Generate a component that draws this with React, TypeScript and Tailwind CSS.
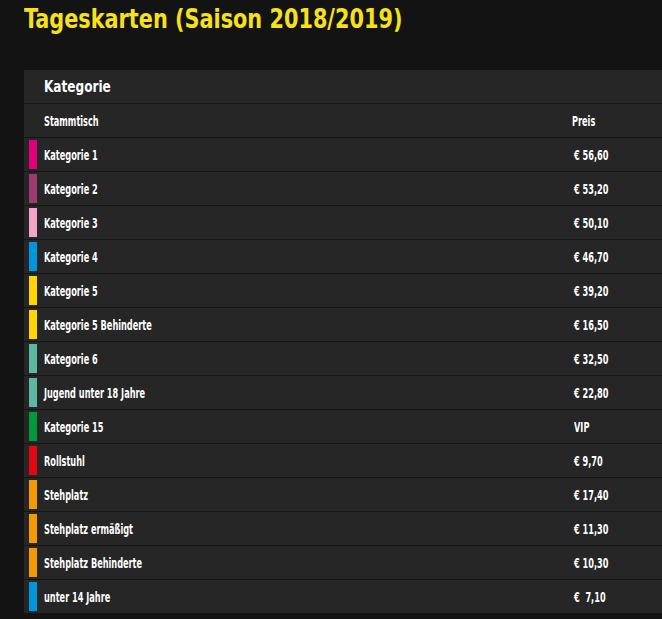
import React from "react";

const rows: { name: string; price: string; color: string }[] = [
  { name: "Kategorie 1", price: "€ 56,60", color: "#e2007a" },
  { name: "Kategorie 2", price: "€ 53,20", color: "#9c3b70" },
  { name: "Kategorie 3", price: "€ 50,10", color: "#f2a5c6" },
  { name: "Kategorie 4", price: "€ 46,70", color: "#0096dc" },
  { name: "Kategorie 5", price: "€ 39,20", color: "#ffd400" },
  { name: "Kategorie 5 Behinderte", price: "€ 16,50", color: "#ffd400" },
  { name: "Kategorie 6", price: "€ 32,50", color: "#5cb8a2" },
  { name: "Jugend unter 18 Jahre", price: "€ 22,80", color: "#5cb8a2" },
  { name: "Kategorie 15", price: "VIP", color: "#00993f" },
  { name: "Rollstuhl", price: "€ 9,70", color: "#e30613" },
  { name: "Stehplatz", price: "€ 17,40", color: "#f39a00" },
  { name: "Stehplatz ermäßigt", price: "€ 11,30", color: "#f39a00" },
  { name: "Stehplatz Behinderte", price: "€ 10,30", color: "#f39a00" },
  { name: "unter 14 Jahre", price: "€  7,10", color: "#0096dc" },
];

const cond = { fontFamily: '"DejaVu Sans Condensed", "Liberation Sans", sans-serif' };

function Narrow({ children, w }: { children: React.ReactNode; w: string }) {
  return (
    <span className={w}>
      <span className="inline-block whitespace-pre origin-left scale-x-[0.65]">{children}</span>
    </span>
  );
}

export default function App() {
  return (
    <div className="w-[662px] h-[619px] overflow-hidden bg-[#131313] pl-6 flex flex-col" style={cond}>
      <h1 className="text-[#f6e11a] text-[26px] font-bold leading-[34px] mt-[2px]">
        <span className="inline-block whitespace-pre origin-left scale-x-[0.89]">Tageskarten (Saison 2018/2019)</span>
      </h1>
      <div className="mt-[34px] bg-[#262626] flex flex-col">
        <div className="h-[34px] flex items-center pl-5 text-white text-[16px] font-bold border-b border-[#161616]">
          <span className="inline-block origin-left scale-x-[0.84]">Kategorie</span>
        </div>
        <div className="h-[34px] flex items-center pl-5 text-white text-[14px] font-bold border-b border-[#161616] pt-[1px]">
          <Narrow w="w-[528px]">Stammtisch</Narrow>
          <Narrow w="">Preis</Narrow>
        </div>
        {rows.map((r) => (
          <div
            key={r.name}
            className="h-[34px] flex items-center text-white text-[14px] font-bold border-b border-[#161616]"
          >
            <div className="w-[8px] h-[29px] ml-[5px] mr-[7px]" style={{ backgroundColor: r.color }} />
            <Narrow w="w-[530px] pt-[1px]">{r.name}</Narrow>
            <Narrow w="pt-[1px]">{r.price}</Narrow>
          </div>
        ))}
      </div>
    </div>
  );
}
